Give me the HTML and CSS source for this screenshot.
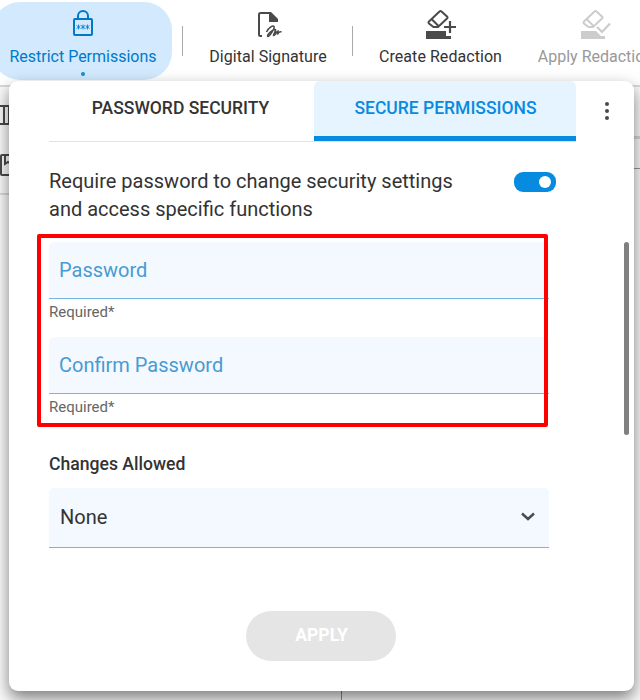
FILE: index.html
```html
<!DOCTYPE html>
<html lang="en">
<head>
    <meta charset="UTF-8">
    <meta name="viewport" content="width=device-width, initial-scale=1.0">
    <title>Secure Permissions</title>
    <link rel="stylesheet" href="styles.css">
</head>
<body>
    <header class="toolbar">
        <button class="tool restrict active">
            <svg width="24" height="30" viewBox="0 0 24 30" fill="none" stroke="currentColor" stroke-width="2">
                <rect x="3" y="12" width="18" height="16" rx="1"/>
                <path d="M7 12V9a5 5 0 0 1 10 0v3"/>
                <path d="M7.500 17.500v5M5.500 18.500l4 3M9.500 18.500l-4 3M12 17.500v5M10 18.500l4 3M14 18.500l-4 3M16.500 17.500v5M14.500 18.500l4 3M18.500 18.500l-4 3" stroke-width=".8"/>
            </svg>
            <span>Restrict Permissions</span>
        </button>
        <i class="separator"></i>
        <button class="tool signature">
            <svg width="28" height="30" viewBox="0 0 28 30" fill="none" stroke="currentColor" stroke-width="2">
                <path d="M8 27H6.500Q5 27 5 25.500V5.500Q5 4 6.500 4H16l7 7"/>
                <path d="M15 3h2l7 7v3h-9z" fill="currentColor" stroke="none"/>
                <path d="M12.500 23C15 18 19 16 20 17.500 21 19 16 27 14 27.500 12 27 18 20.500 21 20.500 23 21 19 25.500 19.500 26.500 21 27 22.500 22 24 22L23.500 25.500Q25 22 27.500 23" stroke-width="1.600"/>
            </svg>
            <span>Digital Signature</span>
        </button>
        <i class="separator"></i>
        <button class="tool create">
            <svg width="32" height="30" viewBox="0 0 32 30" fill="none" stroke="currentColor" stroke-width="2">
                <path d="M1 22h20v5h5v3H1z" fill="currentColor" stroke="none"/>
                <path d="M4 12.500L14.500 2.500Q15.500 1.500 16.500 2.500l5.500 5Q23 8.500 22 9.500L13 18H8.500L4 14.500Q3 13.500 4 12.500zM7 10.500l7 7"/>
                <path d="M25 12v12M19 18h12" stroke-width="2.200"/>
            </svg>
            <span>Create Redaction</span>
        </button>
        <button class="tool apply" disabled>
            <svg width="32" height="30" viewBox="0 0 32 30" fill="none" stroke="currentColor" stroke-width="2">
                <path d="M1 22h15l5 5h4v3H1z" fill="currentColor" stroke="none"/>
                <path d="M4 12.500L14.500 2.500Q15.500 1.500 16.500 2.500l5.500 5Q23 8.500 22 9.500L13 18H8.500L4 14.500Q3 13.500 4 12.500zM7 10.500l7 7"/>
                <path d="M17 18l5 5 8-8.500" stroke-width="2.200"/>
            </svg>
            <span>Apply Redaction</span>
        </button>
    </header>

    <main class="workspace">
        <aside class="left-rail">
            <svg width="22" height="22" viewBox="0 0 22 22" fill="none" stroke="currentColor" stroke-width="2">
                <path d="M1 2h20v18H1zM16 2v18"/>
            </svg>
            <svg width="22" height="22" viewBox="0 0 22 22" fill="none" stroke="currentColor" stroke-width="2">
                <path d="M22 1h-8Q13 1 13 2v18Q13 21 14 21h8M17 1v9l3-2 3 2"/>
            </svg>
        </aside>
        <i class="page-divider"></i>
        <aside class="right-rail"></aside>
    </main>

    <section class="panel">
        <div class="panel-header">
            <nav class="tabs">
                <button class="tab">PASSWORD SECURITY</button>
                <button class="tab selected">SECURE PERMISSIONS</button>
            </nav>
            <button class="more" aria-label="More"><i></i><i></i><i></i></button>
        </div>

        <div class="panel-body">
            <div class="setting">
                <p>Require password to change security settings<br>and access specific functions</p>
                <span class="toggle"></span>
            </div>
            <div class="passwords">
                <div class="field"><span>Password</span></div>
                <small>Required*</small>
                <div class="field"><span>Confirm Password</span></div>
                <small>Required*</small>
            </div>
            <h3>Changes Allowed</h3>
            <div class="select">
                <span>None</span>
                <svg width="14" height="10" viewBox="0 0 14 10" fill="none" stroke="#4a4a4a" stroke-width="2.400">
                    <path d="M1 1.500l6 5.500 6-5.500"/>
                </svg>
            </div>
            <button class="submit" disabled>APPLY</button>
        </div>
        <div class="highlight"></div>
        <div class="scrollbar"></div>
    </section>
</body>
</html>
```

FILE: styles.css
```css
* {
    box-sizing: border-box;
}
body {
    margin: 0;
    height: 700px;
    overflow: hidden;
    position: relative;
    font-family: Roboto, "Liberation Sans", sans-serif;
    color: #333;
    background: #fff;
}
button {
    border: 0;
    padding: 0;
    background: none;
    font-family: inherit;
    color: inherit;
}
.toolbar {
    display: flex;
    height: 87px;
    padding-top: 2px;
    border-bottom: 2px solid #d9d9d9;
    overflow: hidden;
}
.tool {
    display: flex;
    flex-direction: column;
    align-items: center;
    flex: none;
    height: 78px;
    padding-top: 7px;
    font-size: 16px;
    line-height: 20px;
    white-space: nowrap;
}
.tool svg {
    color: #4a4a4a;
    margin-bottom: 8px;
    flex: none;
}
.restrict {
    width: 180px;
    margin-left: -8px;
    padding: 5px 0 0 2px;
    border-radius: 28px;
    background: #d2e9fe;
    color: #0079c9;
}
.restrict svg {
    color: #0079c9;
    margin-bottom: 10px;
}
.restrict::after {
    content: "";
    width: 4px;
    height: 4px;
    margin-top: 5px;
    border-radius: 50%;
    background: #168bd3;
}
.separator {
    width: 1px;
    height: 30px;
    margin: 24px 0 0 10px;
    background: #aaa;
    flex: none;
}
.signature {
    width: 170px;
    margin-right: -11px;
}
.signature span {
    letter-spacing: .05px;
}
.create {
    width: 175px;
}
.create span {
    letter-spacing: .05px;
}
.apply {
    width: 135px;
    color: #999;
}
.apply svg {
    color: #ccc;
}
.workspace {
    display: flex;
    height: 613px;
    background: #fafafa;
}
.left-rail {
    width: 9px;
    height: 108px;
    border-bottom: 2px solid #d9d9d9;
    padding-top: 17px;
    color: #4a4a4a;
    overflow: hidden;
}
.left-rail svg {
    display: block;
    margin: 0 0 28px -12px;
}
.page-divider {
    width: 1px;
    margin-left: 332px;
    background: #888;
}
.right-rail {
    flex: 1;
    height: 82px;
    border-bottom: 1px solid #999;
    background: linear-gradient(#fafafa 49px, #d5d5d5 49px, #d5d5d5 52px, #fafafa 52px);
}
.panel {
    position: absolute;
    left: 9px;
    top: 81px;
    width: 625px;
    height: 610px;
    border-radius: 9px;
    background: #fff;
    box-shadow: 0 7px 16px rgba(0, 0, 0, .5);
}
.panel-header {
    display: flex;
    padding-left: 40px;
}
.tabs {
    display: flex;
    width: 527px;
    height: 61px;
    border-bottom: 1px solid #e3e3e3;
}
.tab {
    width: 265px;
    height: 60px;
    padding: 0 2px 7px 0;
    font-size: 17.500px;
    font-weight: 500;
}
.tab.selected {
    width: 262px;
    padding: 0 0 2px 1px;
    border-bottom: 5px solid #078be0;
    border-radius: 6px 6px 0 0;
    background: #e6f4ff;
    color: #078be0;
}
.more {
    display: flex;
    flex-direction: column;
    gap: 3px;
    margin: 21px 0 0 28.500px;
}
.more i {
    width: 4px;
    height: 4px;
    border-radius: 50%;
    background: #4a4a4a;
}
.panel-body {
    display: flex;
    flex-direction: column;
    width: 500px;
    margin-left: 40px;
}
.setting {
    display: flex;
    justify-content: space-between;
    height: 100px;
    padding-top: 25px;
}
.setting p {
    margin: 0;
    font-size: 20px;
    line-height: 28px;
    white-space: nowrap;
}
.toggle {
    display: flex;
    align-items: center;
    justify-content: flex-end;
    width: 42px;
    height: 20px;
    margin: 5px -7px 0 0;
    padding-right: 5px;
    border-radius: 9px;
    background: #078be0;
}
.toggle::after {
    content: "";
    width: 12px;
    height: 12px;
    border-radius: 50%;
    background: #fff;
}
.passwords {
    height: 204px;
}
.field {
    display: flex;
    align-items: center;
    height: 57px;
    padding-left: 10px;
    border-bottom: 1px solid #75b5df;
    border-radius: 5px 5px 0 0;
    background: #f3f9fe;
    color: #489bd3;
    font-size: 20px;
}
.passwords small {
    display: block;
    height: 38px;
    padding-top: 3px;
    font-size: 15px;
    line-height: 20px;
    color: #666;
}
h3 {
    height: 42px;
    margin: 0;
    padding-top: 7px;
    font-size: 17.600px;
    line-height: 22px;
    font-weight: 500;
}
.select {
    display: flex;
    align-items: center;
    justify-content: space-between;
    height: 60px;
    padding: 0 14px 1px 11px;
    border-bottom: 1px solid #75b5df;
    border-radius: 5px 5px 0 0;
    background: #f3f9fe;
    font-size: 20px;
}
.submit {
    width: 150px;
    height: 50px;
    margin: 63px 0 0 197px;
    padding: 0 0 3px 1px;
    border-radius: 25px;
    background: #e5e5e5;
    color: #fff;
    font-size: 17.600px;
    font-weight: 700;
}
.highlight {
    position: absolute;
    left: 28px;
    top: 153px;
    width: 511px;
    height: 193px;
    border: 4px solid #f00;
    border-radius: 2px;
}
.scrollbar {
    position: absolute;
    right: 5px;
    top: 161px;
    width: 5px;
    height: 193px;
    border-radius: 3px;
    background: #808080;
}
```
